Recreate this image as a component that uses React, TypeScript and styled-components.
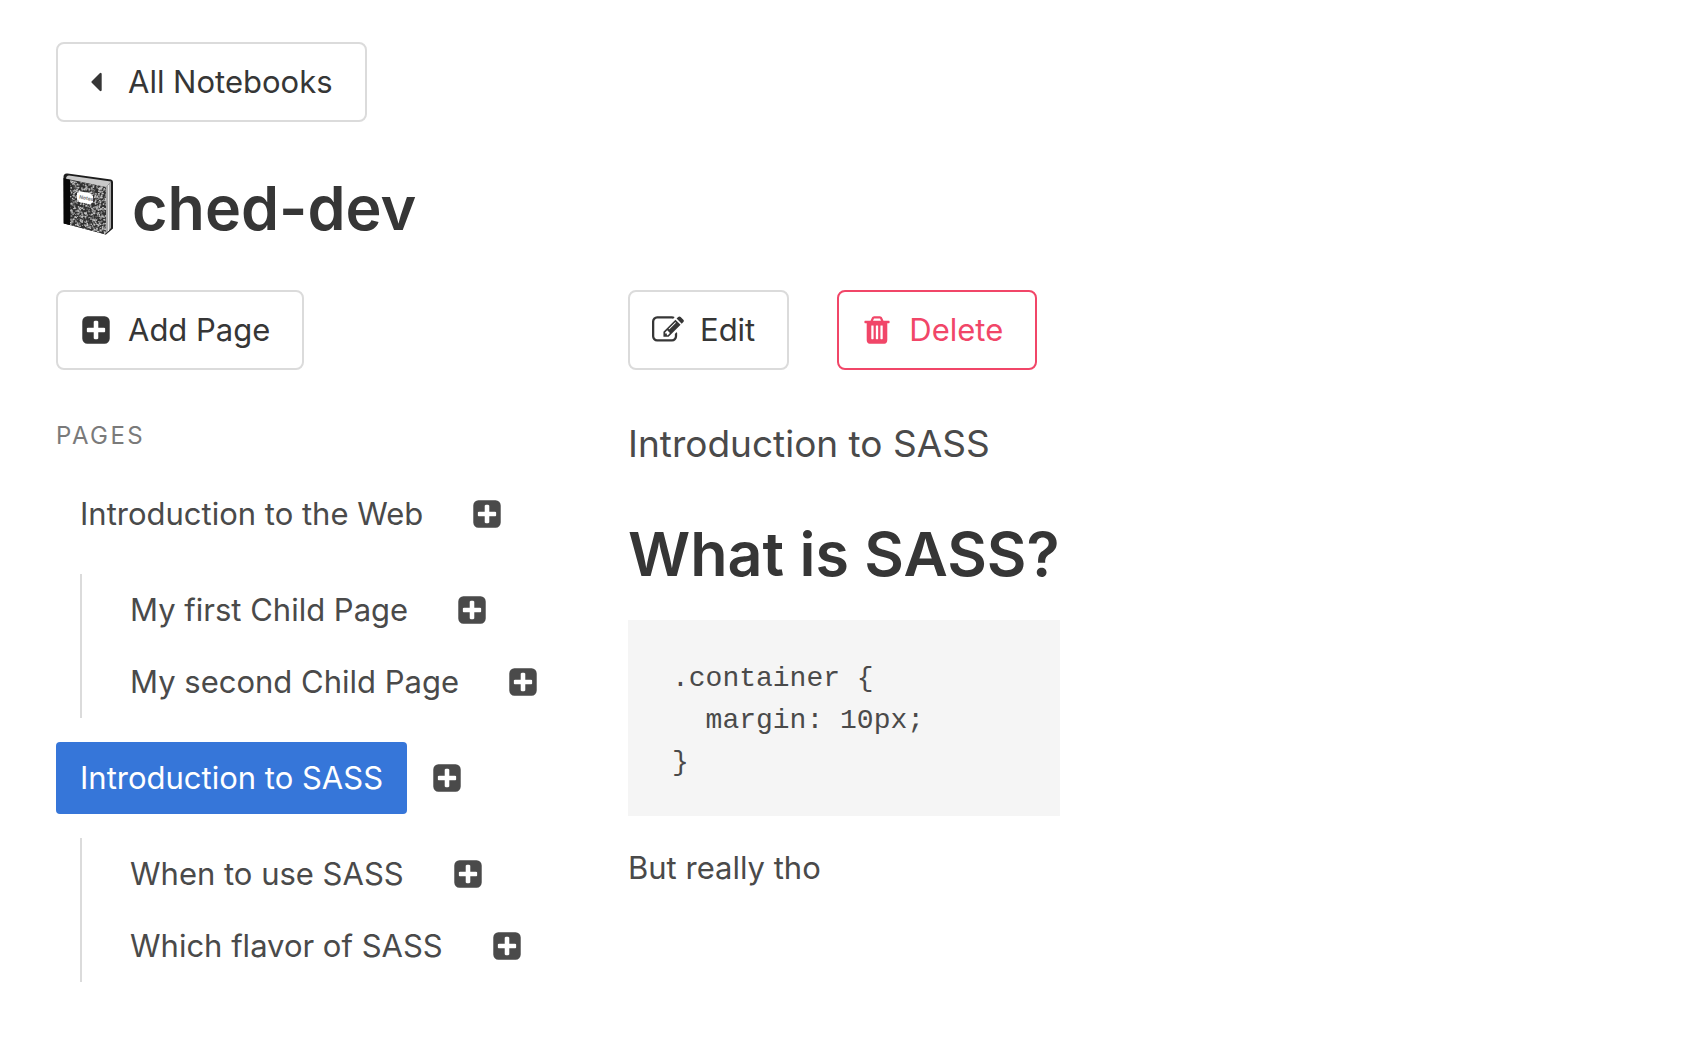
import React from 'react';
import styled, { createGlobalStyle, css } from 'styled-components';

const colors = {
  text: '#4a4a4a',
  strong: '#363636',
  border: '#dbdbdb',
  muted: '#7a7a7a',
  link: '#3676d9',
  danger: '#f14668',
  code: '#f5f5f5',
};

const GlobalStyle = createGlobalStyle`
  * { box-sizing: border-box; }
  body {
    margin: 0;
    background: #fff;
    color: ${colors.text};
    font: 400 31px/48px Inter, 'Liberation Sans', sans-serif;
  }
`;

const Page = styled.main`
  padding: 42px 56px;
`;

const buttonBox = css`
  display: inline-flex;
  align-items: center;
  height: 80px;
  padding: 0 32px 0 14px;
  border: 2px solid ${colors.border};
  border-radius: 8px;
  background: #fff;
  color: ${colors.strong};
  font: inherit;
  text-decoration: none;
  white-space: nowrap;
  cursor: pointer;
`;

const BackLink = styled.a`
  ${buttonBox}
`;

const Button = styled.button<{ $danger?: boolean }>`
  ${buttonBox}
  ${(p) => p.$danger && css`
    border-color: ${colors.danger};
    color: ${colors.danger};
  `}
`;

const IconSlot = styled.span`
  display: inline-flex;
  justify-content: center;
  width: 48px;
  margin-right: 8px;
`;

const headingText = css`
  color: ${colors.strong};
  font-size: 61px;
  font-weight: 600;
  line-height: 72px;
`;

const Title = styled.h1`
  display: flex;
  align-items: center;
  gap: 18px;
  margin: 50px 0 46px;
  padding-left: 6px;
  ${headingText}
`;

const BookDrawing = styled.svg`
  flex: none;
  margin-bottom: 8px;
`;

const Columns = styled.div`
  display: grid;
  grid-template-columns: 524px minmax(0, 1fr);
  gap: 48px;
`;

const MenuLabel = styled.h2`
  margin: 48px 0 24px;
  color: ${colors.muted};
  font-size: 24px;
  font-weight: 400;
  line-height: 36px;
  letter-spacing: 0.1em;
  text-transform: uppercase;
`;

const PageList = styled.ul`
  margin: 0;
  padding: 0;
  list-style: none;
`;

const ChildList = styled(PageList)`
  margin: 24px;
  padding-left: 24px;
  border-left: 2px solid ${colors.border};
`;

const Row = styled.div`
  display: flex;
  align-items: center;
  height: 72px;
`;

const PageLink = styled.a<{ $active?: boolean }>`
  padding: 12px 24px;
  border-radius: 4px;
  background: ${(p) => (p.$active ? colors.link : 'transparent')};
  color: ${(p) => (p.$active ? '#fff' : colors.text)};
  text-decoration: none;
  white-space: nowrap;
`;

const AddChild = styled.button`
  display: flex;
  padding: 0 24px;
  border: 0;
  background: none;
  color: ${colors.text};
  cursor: pointer;
`;

const Actions = styled.div`
  display: flex;
  gap: 48px;
`;

const Article = styled.article`
  width: fit-content;
  margin-top: 48px;
`;

const Subtitle = styled.p`
  margin: 0 0 48px;
  font-size: 37px;
  line-height: 52px;
`;

const Heading = styled.h2`
  margin: 0 0 30px;
  ${headingText}
`;

const Code = styled.pre`
  margin: 0 0 28px;
  padding: 38px 44px 32px;
  background: ${colors.code};
  font: 400 28px/42px 'Liberation Mono', monospace;
`;

const Paragraph = styled.p`
  margin: 0;
`;

const iconPaths = {
  caret:
    'M1216 448v896q0 26-19 45t-45 19-45-19l-448-448q-19-19-19-45t19-45l448-448q19-19 45-19t45 19 19 45z',
  plus:
    'M1408 960v-128q0-26-19-45t-45-19h-320v-320q0-26-19-45t-45-19h-128q-26 0-45 19t-19 45v320h-320q-26 0-45 19t-19 45v128q0 26 19 45t45 19h320v320q0 26 19 45t45 19h128q26 0 45-19t19-45v-320h320q26 0 45-19t19-45zm256-544v960q0 119-84.500 203.500t-203.500 84.500h-960q-119 0-203.500-84.500t-84.500-203.500v-960q0-119 84.500-203.500t203.500-84.500h960q119 0 203.500 84.500t84.500 203.500z',
  edit:
    'M888 1184l116-116-152-152-116 116v56h96v96h56zm440-720q-16-16-33 1l-350 350q-17 17-1 33t33-1l350-350q17-17 1-33zm80 594v190q0 119-84.500 203.500t-203.500 84.500h-832q-119 0-203.500-84.500t-84.500-203.500v-832q0-119 84.500-203.500t203.500-84.500h832q63 0 117 25 15 7 18 23 3 17-9 29l-49 49q-14 14-32 8-23-6-45-6h-832q-66 0-113 47t-47 113v832q0 66 47 113t113 47h832q66 0 113-47t47-113v-126q0-13 9-22l64-64q15-15 35-7t20 29zm-96-738l288 288-672 672h-288v-288zm444 132l-92 92-288-288 92-92q28-28 68-28t68 28l152 152q28 28 28 68t-28 68z',
  trash:
    'M704 1376v-704q0-14-9-23t-23-9h-64q-14 0-23 9t-9 23v704q0 14 9 23t23 9h64q14 0 23-9t9-23zm256 0v-704q0-14-9-23t-23-9h-64q-14 0-23 9t-9 23v704q0 14 9 23t23 9h64q14 0 23-9t9-23zm256 0v-704q0-14-9-23t-23-9h-64q-14 0-23 9t-9 23v704q0 14 9 23t23 9h64q14 0 23-9t9-23zm-544-992h448l-48-117q-7-9-17-11h-317q-10 2-17 11zm928 32v64q0 14-9 23t-23 9h-96v948q0 83-47 143.500t-113 60.500h-832q-66 0-113-58.500t-47-141.500v-952h-96q-14 0-23-9t-9-23v-64q0-14 9-23t23-9h309l70-167q15-37 54-63t79-26h320q40 0 79 26t54 63l70 167h309q14 0 23 9t9 23z',
};

const Icon = ({ name }: { name: keyof typeof iconPaths }) => (
  <svg width="32" height="32" viewBox="0 0 1792 1792" overflow="visible" fill="currentColor" aria-hidden="true">
    <path d={iconPaths[name]} />
  </svg>
);

/* Marbled cover: light flecks scattered from a fixed seed. */
const flecks = (() => {
  let seed = 7;
  const next = () => {
    seed = (seed * 16807) % 2147483647;
    return seed / 2147483647;
  };
  return Array.from({ length: 800 }, () => ({
    x: 8 + next() * 37,
    y: 6 + next() * 57,
    r: 0.4 + next() * 0.6,
    fill: next() > 0.4 ? '#c4c4c4' : '#858585',
  }));
})();

const Notebook = () => (
  <BookDrawing width="52" height="64" viewBox="0 0 52 64" aria-hidden="true">
    <defs>
      <clipPath id="cover">
        <path d="M8 8l36 7v47.500L8 53z" />
      </clipPath>
    </defs>
    <path d="M1.500 5q0-4 4-3.500L49 7.500q2 .5 2 2.500v46.500L44 62.500 2 51.500z" fill="#1d1d1d" />
    <path d="M7 3.500L49 9.500 44 15.500 4 7q0-3.500 3-3.500z" fill="#c9c9c9" />
    <path d="M44 15l5-5.500V56l-3.500 4L44 61z" fill="#a9a9a9" />
    <path d="M46.500 13v46" stroke="#e4e4e4" strokeWidth="1" />
    <path d="M3 6.500l41 8.500v47.500L3 51.500z" fill="#303030" />
    <g clipPath="url(#cover)">
      {flecks.map((f, i) => (
        <circle key={i} cx={f.x} cy={f.y} r={f.r} fill={f.fill} />
      ))}
    </g>
    <path d="M1.500 6l6.500 2v45l-6.500-1.500z" fill="#080808" />
    <path d="M17 19l12 2.500q0 2 2 2.500v6.500q-2 0-2 2L17 30q0-2-2-2.500V21q2 0 2-2z" fill="#fff" />
    <text x="17" y="26.500" fontSize="5" fontWeight="700" fill="#777" transform="rotate(11 17 26)">Notes</text>
  </BookDrawing>
);

type PageItem = { title: string; active?: boolean; children?: PageItem[] };

const pages: PageItem[] = [
  {
    title: 'Introduction to the Web',
    children: [{ title: 'My first Child Page' }, { title: 'My second Child Page' }],
  },
  {
    title: 'Introduction to SASS',
    active: true,
    children: [{ title: 'When to use SASS' }, { title: 'Which flavor of SASS' }],
  },
];

const slug = (title: string) => title.toLowerCase().replace(/ /g, '-');

const PageEntry = ({ page }: { page: PageItem }) => (
  <li>
    <Row>
      <PageLink href={`#${slug(page.title)}`} $active={page.active} aria-current={page.active ? 'page' : undefined}>
        {page.title}
      </PageLink>
      <AddChild type="button" aria-label={`Add page under ${page.title}`}>
        <Icon name="plus" />
      </AddChild>
    </Row>
    {page.children && (
      <ChildList>
        {page.children.map((child) => (
          <PageEntry key={child.title} page={child} />
        ))}
      </ChildList>
    )}
  </li>
);

export default function App() {
  return (
    <>
      <GlobalStyle />
      <Page>
        <BackLink href="#notebooks">
          <IconSlot><Icon name="caret" /></IconSlot>
          All Notebooks
        </BackLink>
        <Title>
          <Notebook />
          ched-dev
        </Title>
        <Columns>
          <nav aria-label="Pages">
            <Button type="button">
              <IconSlot><Icon name="plus" /></IconSlot>
              Add Page
            </Button>
            <MenuLabel>Pages</MenuLabel>
            <PageList>
              {pages.map((page) => (
                <PageEntry key={page.title} page={page} />
              ))}
            </PageList>
          </nav>
          <section>
            <Actions>
              <Button type="button">
                <IconSlot><Icon name="edit" /></IconSlot>
                Edit
              </Button>
              <Button type="button" $danger>
                <IconSlot><Icon name="trash" /></IconSlot>
                Delete
              </Button>
            </Actions>
            <Article>
              <Subtitle>Introduction to SASS</Subtitle>
              <Heading>What is SASS?</Heading>
              <Code>{'.container {\n  margin: 10px;\n}'}</Code>
              <Paragraph>But really tho</Paragraph>
            </Article>
          </section>
        </Columns>
      </Page>
    </>
  );
}
